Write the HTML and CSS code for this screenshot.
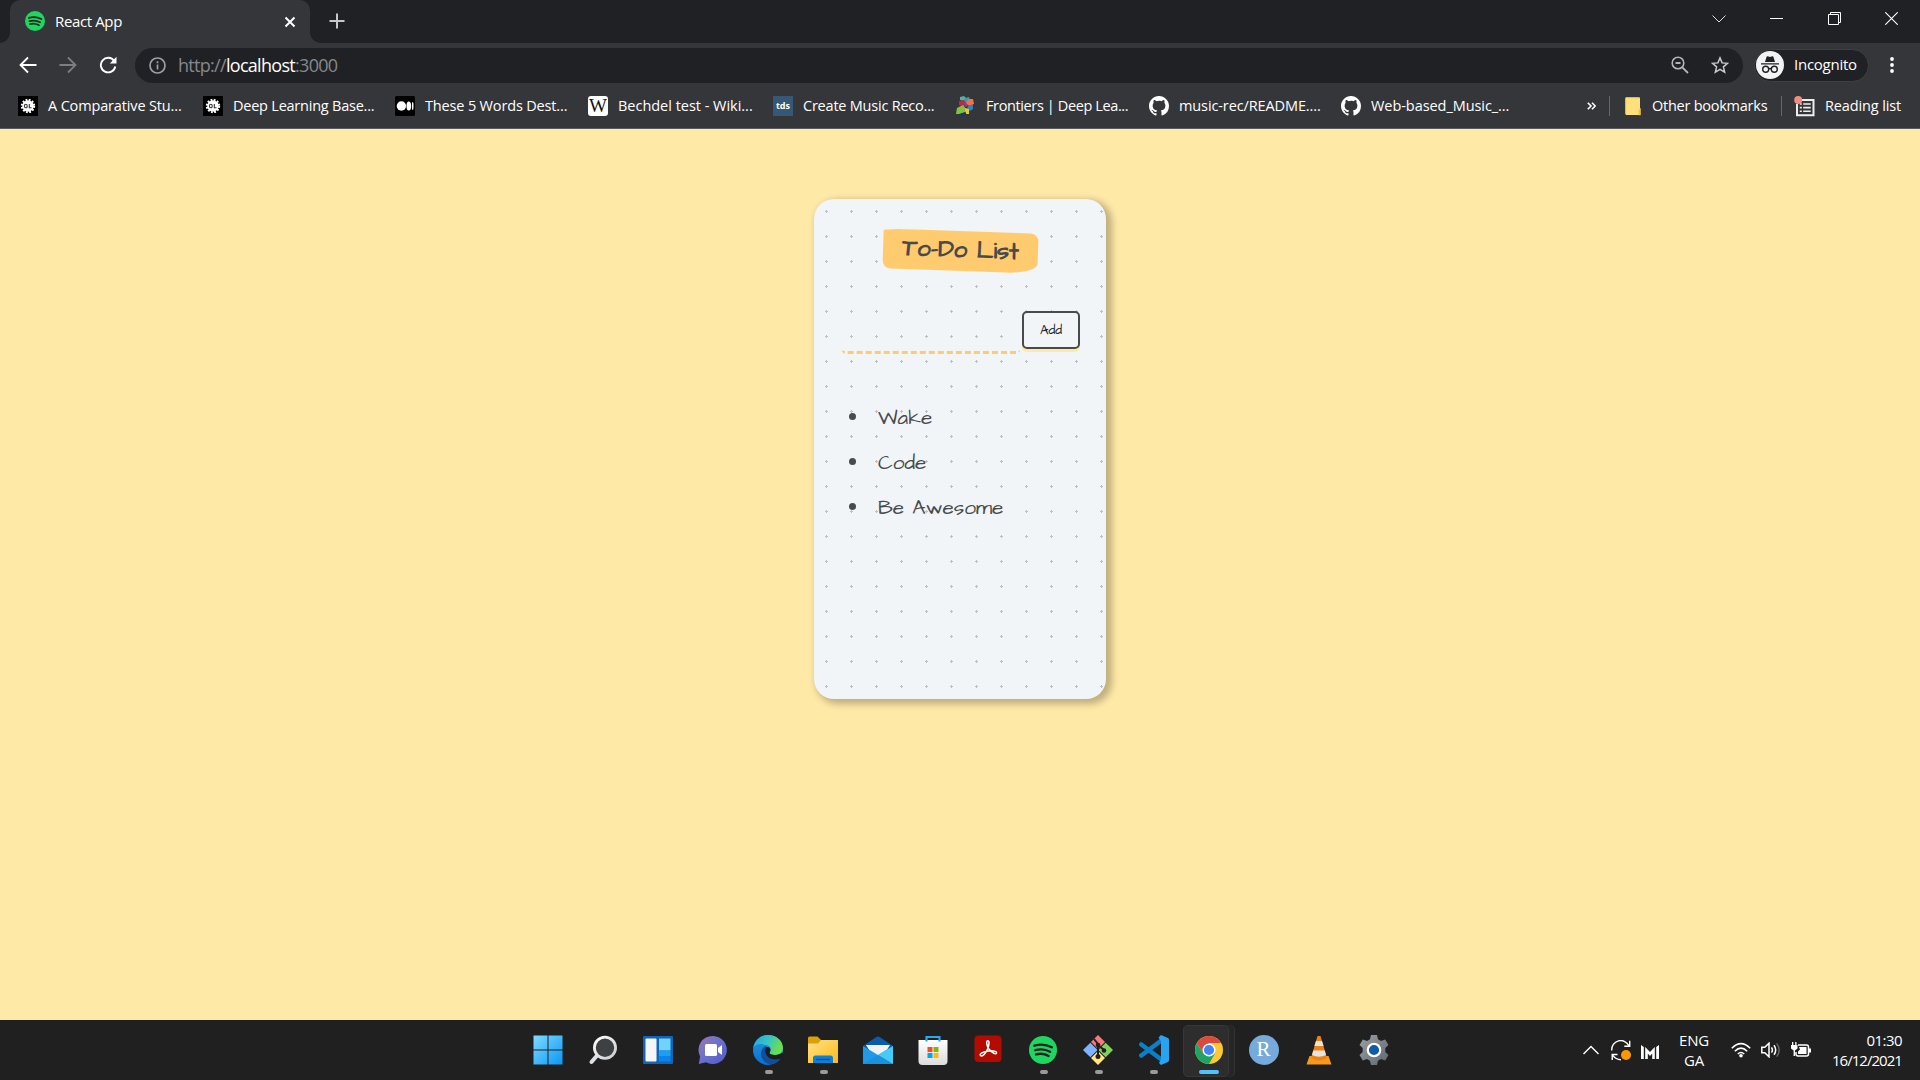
FILE: index.html
```
<!DOCTYPE html>
<html lang="en">
<head>
<meta charset="utf-8">
<title>React App</title>
<link rel="stylesheet" href="styles.css">
</head>
<body>
<svg class="defs" width="0" height="0">
  <defs>
    <linearGradient id="win" x1="0" y1="0" x2="1" y2="1"><stop offset="0" stop-color="#7fdcff"/><stop offset="1" stop-color="#0a96f5"/></linearGradient>
    <linearGradient id="lens" x1="0" y1="0" x2="1" y2="1"><stop offset="0" stop-color="#fff"/><stop offset="1" stop-color="#c9cccf"/></linearGradient>
    <linearGradient id="chat" x1="0" y1="0" x2="1" y2="1"><stop offset="0" stop-color="#9a78b0"/><stop offset=".5" stop-color="#6a6fd0"/><stop offset="1" stop-color="#5558c0"/></linearGradient>
    <linearGradient id="edgeTop" x1="0" y1="0" x2="1" y2=".4"><stop offset="0" stop-color="#1ca4e0"/><stop offset=".5" stop-color="#35c3c9"/><stop offset="1" stop-color="#6be04a"/></linearGradient>
    <linearGradient id="edgeLow" x1="0" y1="0" x2="0" y2="1"><stop offset="0" stop-color="#2398de"/><stop offset="1" stop-color="#0b6fd0"/></linearGradient>
    <linearGradient id="folder" x1="0" y1="0" x2="1" y2="1"><stop offset="0" stop-color="#ffe28a"/><stop offset="1" stop-color="#fdb913"/></linearGradient>
    <linearGradient id="gear" x1="0" y1="0" x2="1" y2="1"><stop offset="0" stop-color="#9aa0a6"/><stop offset="1" stop-color="#5f676e"/></linearGradient>
    <linearGradient id="bag" x1="0" y1="0" x2="0" y2="1"><stop offset="0" stop-color="#fff"/><stop offset="1" stop-color="#dcdcdc"/></linearGradient>
    <symbol id="spotify" viewBox="0 0 24 24"><circle cx="12" cy="12" r="12" fill="#1ed760"/><path d="M4.6 8.3c5-1.5 10.600-1 15 1.400M5.400 12.200c4.300-1.200 9-.8 12.700 1.400M6 15.800c3.600-1 7.500-.6 10.800 1.300" fill="none" stroke="#1c2420" stroke-width="2" stroke-linecap="round"/></symbol>
    <symbol id="github" viewBox="0 0 16 16"><path fill="#fff" d="M8 0C3.580 0 0 3.580 0 8c0 3.540 2.290 6.530 5.470 7.590.4.070.55-.17.55-.38 0-.19-.01-.82-.01-1.490-2.010.37-2.530-.49-2.690-.94-.09-.23-.48-.94-.82-1.130-.28-.15-.68-.52-.01-.53.63-.01 1.080.58 1.230.82.72 1.210 1.870.87 2.330.66.070-.52.28-.87.51-1.070-1.780-.2-3.640-.89-3.640-3.950 0-.87.31-1.590.82-2.150-.08-.2-.36-1.020.08-2.120 0 0 .67-.21 2.200.82A7.600 7.600 0 0 1 8 3.860c.68 0 1.360.09 2 .27 1.530-1.040 2.200-.82 2.200-.82.44 1.100.16 1.920.08 2.120.51.56.82 1.270.82 2.150 0 3.070-1.870 3.750-3.650 3.950.29.25.54.73.54 1.480 0 1.070-.01 1.930-.01 2.200 0 .21.15.46.55.38A8.010 8.010 0 0 0 16 8c0-4.420-3.580-8-8-8z"/></symbol>
    <symbol id="dl" viewBox="0 0 20 20"><path fill="#000" d="M0 0h20v20H0z"/><circle cx="10" cy="10" r="5.800" fill="#fff"/><circle cx="10" cy="10" r="6.200" fill="none" stroke="#fff" stroke-width="2" stroke-dasharray="1.800 1.450"/><path d="M7.800 8.200q-1.400 0-1.400 1.800t1.400 1.800 1.400-1.800-1.400-1.800zM11.300 8v3.800h2.200" fill="none" stroke="#333" stroke-width="1.100"/></symbol>
  </defs>
</svg>

<header class="browser">
  <div class="tabstrip">
    <div class="tab">
      <svg class="fav" width="20" height="20"><use href="#spotify"/></svg>
      <span class="tab-title">React App</span>
      <svg width="12" height="12" viewBox="0 0 12 12"><path d="M1.500 1.500l9 9m0-9l-9 9" stroke="#fff" stroke-width="2"/></svg>
    </div>
    <svg class="newtab" width="16" height="16" viewBox="0 0 16 16"><path d="M8 .5v15M.5 8h15" stroke="#c6c7c9" stroke-width="2"/></svg>
    <div class="winbtns">
      <span><svg width="14" height="14" viewBox="0 0 14 14"><path d="M.5 3.500l6.500 6.500 6.500-6.500" fill="none" stroke="#ddd"/></svg></span>
      <span><svg width="13" height="13" viewBox="0 0 13 13"><path d="M0 6.500h13" stroke="#fff"/></svg></span>
      <span><svg width="13" height="13" viewBox="0 0 13 13"><path d="M.5 2.500h10v10H.5zM2.500 2.500v-2h10v10h-2" fill="none" stroke="#fff"/></svg></span>
      <span><svg width="13" height="13" viewBox="0 0 13 13"><path d="M.3.3l12.400 12.400m0-12.400L.3 12.700" stroke="#fff" stroke-width="1.100"/></svg></span>
    </div>
  </div>

  <div class="toolbar">
    <div class="nav">
      <svg width="18" height="18" viewBox="0 0 18 18"><path d="M17.500 9H2M9 1.500L1.500 9 9 16.500" fill="none" stroke="#fff" stroke-width="1.800"/></svg>
      <svg width="18" height="18" viewBox="0 0 18 18"><path d="M.5 9H16M9 1.500L16.500 9 9 16.500" fill="none" stroke="#7d7e82" stroke-width="1.800"/></svg>
      <svg width="18" height="18" viewBox="0 0 18 18"><path d="M15.200 5A7.300 7.300 0 1 0 16.300 10.500" fill="none" stroke="#fff" stroke-width="1.900"/><path d="M17.500.8v6.700h-6.700z" fill="#fff"/></svg>
    </div>
    <div class="omnibox">
      <svg width="17" height="17" viewBox="0 0 17 17"><circle cx="8.500" cy="8.500" r="7.500" fill="none" stroke="#9aa0a6" stroke-width="1.700"/><path d="M8.500 7.500v5M8.500 4.300v1.900" stroke="#9aa0a6" stroke-width="1.700"/></svg>
      <span class="url">http://<b>localhost</b>:3000</span>
      <svg class="mag" width="18" height="18" viewBox="0 0 18 18"><circle cx="7" cy="7" r="5.800" fill="none" stroke="#b4b6b9" stroke-width="1.600"/><path d="M4.500 7h5M11.300 11.300l5.700 5.700" stroke="#b4b6b9" stroke-width="1.800"/></svg>
      <svg class="star" width="18" height="18" viewBox="0 0 18 18"><path d="M9 1.900l2.100 5 5.400.45-4.100 3.500 1.250 5.250L9 13.300l-4.650 2.800L5.600 10.850l-4.100-3.500 5.400-.45z" fill="none" stroke="#c8c9cb" stroke-width="1.500"/></svg>
    </div>
    <div class="incog">
      <svg width="28" height="28" viewBox="0 0 28 28"><circle cx="14" cy="14" r="14" fill="#f1f3f4"/><path d="M9 11l1.600-5.200q.4-.8 1.200-.5l2.200.6 2.200-.6q.8-.3 1.200.5L19 11zM5 12.200h18v1.300H5z" fill="#202124"/><g fill="none" stroke="#202124" stroke-width="1.400"><circle cx="9.700" cy="18.300" r="3"/><circle cx="18.300" cy="18.300" r="3"/><path d="M12.700 18q1.300-.9 2.600 0"/></g></svg>
      <span class="incog-text">Incognito</span>
    </div>
    <svg class="menu" width="4" height="16" viewBox="0 0 4 16" fill="#fff"><circle cx="2" cy="2" r="1.900"/><circle cx="2" cy="8" r="1.900"/><circle cx="2" cy="14" r="1.900"/></svg>
  </div>

  <nav class="bookmarks">
    <div class="bm w185"><svg width="20" height="20"><use href="#dl"/></svg><span class="t1">A Comparative Stu...</span></div>
    <div class="bm w192"><svg width="20" height="20"><use href="#dl"/></svg><span class="t2">Deep Learning Base...</span></div>
    <div class="bm w193"><svg width="20" height="20" viewBox="0 0 20 20"><rect width="20" height="20" rx="1.500"/><circle cx="6.400" cy="10" r="4.700" fill="#fff"/><ellipse cx="13.800" cy="10" rx="2.300" ry="4.600" fill="#fff"/><ellipse cx="17.700" cy="10" rx=".8" ry="4.100" fill="#fff"/></svg><span class="t3">These 5 Words Dest...</span></div>
    <div class="bm w185"><b class="fi wiki">W</b><span class="t4">Bechdel test - Wiki...</span></div>
    <div class="bm w183"><b class="fi tds">tds</b><span class="t5">Create Music Reco...</span></div>
    <div class="bm w193"><svg width="20" height="20" viewBox="0 0 20 20"><path d="M4 1l4-1 2 2-2 3-4-1z" fill="#4bb5a8"/><path d="M9 2l4-1 1 3-3 3-3-2z" fill="#35a0a0"/><path d="M3 5l5-1 2 4-3 3-4-2z" fill="#c22740"/><path d="M8 6l3 0 1 4-3 1z" fill="#8b3fa0"/><path d="M12 3l5 0 1 5-5 2-3-3z" fill="#f2704e"/><path d="M13 9l4 0 0 4-3 2-3-3z" fill="#2f83c5"/><path d="M1 12l6-3 4 5-3 4-8 0z" fill="#8abf3e"/><path d="M9 12l4 1 0 5-3 0z" fill="#f6c61d"/><path d="M3 18l6-2 2 3-4 1z" fill="#12386f"/></svg><span class="t6">Frontiers | Deep Lea...</span></div>
    <div class="bm w192"><svg width="20" height="20"><use href="#github"/></svg><span class="t7">music-rec/README....</span></div>
    <div class="bm"><svg width="20" height="20"><use href="#github"/></svg><span class="t8">Web-based_Music_...</span></div>
    <div class="bm-right">
      <svg class="more" width="9" height="8" viewBox="0 0 9 8"><path d="M.8.8L4 4 .8 7.200M5 .8L8.200 4 5 7.200" fill="none" stroke="#fff" stroke-width="1.600"/></svg>
      <i class="sep"></i>
      <svg class="fold" width="16" height="19" viewBox="0 0 16 19"><path d="M1 .5h13q1 0 1 1v9.500h.5v7H1.500q-1 0-1-1V1z" fill="#ffe07d"/><path d="M.5 18.200h13V14q0-2 2-2.200v6.400z" fill="#f3c62f"/><path d="M.8 17V.8H14.500" fill="none" stroke="#f6d04c"/></svg>
      <span class="other">Other bookmarks</span>
      <i class="sep sep2"></i>
      <svg class="rl" width="21" height="21" viewBox="0 0 21 21"><path d="M3 8v11.200h16.500V4H7.500" fill="none" stroke="#eee" stroke-width="2"/><path d="M5.800 8h2M5.800 11.600h2M5.800 15.200h2M9.200 8h7.500M9.200 11.600h7.500M9.200 15.200h7.500" stroke="#eee" stroke-width="1.600"/><circle cx="4.200" cy="4" r="4" fill="#f28b82"/></svg>
      <span class="reading">Reading list</span>
    </div>
  </nav>
</header>

<main class="page">
  <section class="card">
    <h1 class="heading"><span>To-Do List</span></h1>
    <div class="form">
      <div class="input"></div>
      <button class="add">Add</button>
    </div>
    <ul class="todos">
      <li><span>Wake</span></li>
      <li><span>Code</span></li>
      <li><span>Be Awesome</span></li>
    </ul>
  </section>
</main>

<footer class="taskbar">
  <div class="apps">
    <div class="app"><svg width="30" height="30" viewBox="0 0 30 30"><path d="M.5 .5h14v14h-14zM15.500.5h14v14h-14zM.5 15.500h14v14h-14zM15.500 15.500h14v14h-14z" fill="url(#win)"/></svg></div>
    <div class="app"><svg width="30" height="30" viewBox="0 0 30 30"><path d="M9.500 20L3.500 27" stroke="#dfe1e3" stroke-width="4" stroke-linecap="round"/><circle cx="17" cy="12.800" r="10.600" fill="#3e4042" stroke="url(#lens)" stroke-width="2.800"/></svg></div>
    <div class="app"><svg width="30" height="30" viewBox="0 0 30 30"><rect y="1" width="30" height="28" rx="1" fill="#0f66b8"/><rect x="2.500" y="3.500" width="11" height="23" rx="1" fill="#f5f5f5"/><path d="M16 3.500h11.500v12H16z" fill="#6fd3ff"/><path d="M16 16h11.500v5H16z" fill="#19a0f5"/><path d="M16 21h11.500v5.500H16z" fill="#0a84e8"/></svg></div>
    <div class="app"><svg width="30" height="30" viewBox="0 0 30 30"><path d="M15 1a14 14 0 1 1-7 26.200L.8 29l1.300-7.500A14 14 0 0 1 15 1z" fill="url(#chat)"/><rect x="7" y="9" width="12" height="12" rx="1.500" fill="#fff"/><path d="M20 13l4-3v10l-4-3z" fill="#fff"/></svg></div>
    <div class="app run"><svg width="30" height="30" viewBox="0 0 30 30"><circle cx="15" cy="15" r="15" fill="url(#edgeLow)"/><path d="M.3 13C2 4 8 0 15 0c9 0 15 6 15 13 0 5-4 7-8 7-5 0-6-1.500-5-3 2-3 0-7-4.500-7C7 8 2.500 9.500.3 13z" fill="url(#edgeTop)"/><path d="M12.500 11C7 14 6 22 12 27c5 4 12 2 16-4-7 3-15 0-14-6 0-2 1-3 1-4z" fill="#104f9c"/><path d="M13 12.500c3-1.500 5.500 1.500 4 4-1.200 2 0 3.500 5 3.500 3.500 0 5.500-1 7-2.500L31 20l-3 3.500c-4 1.700-11 1.500-14-2.800-2-3-2.500-6.500-1-8.200z" fill="#1c1e20"/></svg></div>
    <div class="app run"><svg width="30" height="30" viewBox="0 0 30 30"><path d="M0 3q0-1.500 1.500-1.500h8L13 5v6H0z" fill="#dda006"/><path d="M0 8.500h10L13 5h17v23H0z" fill="url(#folder)"/><path d="M5 28v-5q0-2.500 2.500-2.500h15q2.500 0 2.500 2.500v5z" fill="#0c7fd6"/><path d="M8 24.500h14" stroke="#0a4d94" stroke-width="1.300"/></svg></div>
    <div class="app"><svg width="30" height="30" viewBox="0 0 30 30"><path d="M0 11L13 2.200q2-1.500 4 0L30 11l-15 10z" fill="#0b5cab"/><path d="M3 10h24l-5 8-7 4-7-4z" fill="#f3f3f3"/><path d="M0 11l15 9 15-9v18H0z" fill="#1d9bea"/><path d="M15 20l15-9v18z" fill="#44cbf8"/><path d="M0 29l15-9 15 9z" fill="#1a91df"/></svg></div>
    <div class="app"><svg width="30" height="30" viewBox="0 0 30 30"><path d="M.5 5h29v21q0 4-4 4h-21q-4 0-4-4z" fill="url(#bag)"/><path d="M8.500 6.500V2h13v4.500" fill="none" stroke="#27a9f0" stroke-width="2.200"/><path d="M9.500 12h5v5h-5z" fill="#f25022"/><path d="M15.500 12h5v5h-5z" fill="#7fba00"/><path d="M9.500 18h5v5h-5z" fill="#00a4ef"/><path d="M15.500 18h5v5h-5z" fill="#ffb900"/></svg></div>
    <div class="app"><svg width="30" height="30" viewBox="0 0 30 30"><rect x="1.500" y=".5" width="27" height="26.500" rx="4" fill="#b30b00"/><path d="M7.500 20.500c-1.500-1.500 2.500-4 8-4.500 5-.5 8.500.2 8 2-.6 2-5-.6-7.600-4C13.500 10.500 13 6 14.600 5.800c2-.2 1.700 4 0 8.200-2 4.600-5.600 8.300-7.100 6.500z" fill="none" stroke="#fff" stroke-width="1.500"/></svg></div>
    <div class="app run"><svg width="28" height="28"><use href="#spotify"/></svg></div>
    <div class="app run"><svg width="30" height="30" viewBox="0 0 30 30"><path d="M15 0l7 7-7 7-7-7z" fill="#f47b7b"/><path d="M7.300 7.700l7.300 7.300-7.300 7.300L0 15z" fill="#80b3ff"/><path d="M22.700 7.700L30 15l-7.300 7.300-7.300-7.300z" fill="#80d25e"/><path d="M15 16l7 7-7 7-7-7z" fill="#ffe680"/><path d="M11 4l4 5v13M15 10l6 5" fill="none" stroke="#231f20" stroke-width="2"/><g fill="#231f20"><circle cx="15" cy="10" r="2.300"/><circle cx="21" cy="15.500" r="2.300"/><circle cx="15" cy="21.500" r="2.500"/></g></svg></div>
    <div class="app run"><svg width="30" height="30" viewBox="0 0 30 30"><path d="M2.300 9.500L23 25M2.300 20.500L23 5" stroke="#0a7fcb" stroke-width="4.500" stroke-linecap="round"/><path d="M22 0l7 3q1 .5 1 2v20q0 1.500-1 2l-7 3-2-2 2-4V6.500L19.500 2.500z" fill="#27a3f0"/></svg></div>
    <div class="app run active"><svg width="28" height="28" viewBox="0 0 28 28"><circle cx="14" cy="14" r="14" fill="#fbc934"/><path d="M14 7h12.100A14 14 0 0 0 1.900 7L8 17.500z" fill="#dc4a3d"/><path d="M1.900 7A14 14 0 0 0 14 28l6-10.500-6 2-6-2z" fill="#1fa463"/><circle cx="14" cy="14" r="6.500" fill="#fff"/><circle cx="14" cy="14" r="5.100" fill="#4285f4"/></svg></div>
    <div class="app"><span class="rlogo">R</span></div>
    <div class="app"><svg width="30" height="30" viewBox="0 0 30 30"><path d="M5.500 21h19l3 8.500h-25z" fill="#f79a1c"/><path d="M13.500 1h3L23 23q-8 5-16 0z" fill="#f08010"/><path d="M12 6h6l1.600 5h-9.200zM9.300 15.500h11.400L22 20q-7 3.500-14 0z" fill="#e4e4e4"/></svg></div>
    <div class="app"><svg width="30" height="30" viewBox="0 0 30 30"><path d="M12 0h6l1 4.200 3 1.700 4.200-1.300 3.300 5.400-3.200 3v4l3.200 3-3.300 5.400-4.200-1.300-3 1.700L18 30h-6l-1-4.200-3-1.700-4.200 1.300L.5 20l3.200-3v-4L.5 10l3.300-5.400L8 5.900l3-1.700z" fill="url(#gear)"/><circle cx="15" cy="15" r="6.200" fill="#105ca8" stroke="#fff" stroke-width="2.200"/></svg></div>
  </div>
  <div class="tray">
    <svg class="up" width="16" height="10" viewBox="0 0 16 10"><path d="M.5 9L8 1.500 15.500 9" fill="none" stroke="#fff" stroke-width="1.400"/></svg>
    <svg class="sync" width="20" height="21" viewBox="0 0 20 21"><path d="M.8 10.500A9 9 0 0 1 18 6M18.700.8V6.200H13.300M1.200 20v-5.500H6.500M2 15.500Q4.500 19.500 10 19.700" fill="none" stroke="#fff" stroke-width="1.400"/><circle cx="15" cy="15" r="5" fill="#ff9800"/></svg>
    <svg class="mm" width="18" height="14" viewBox="0 0 18 14"><path d="M0 0l2.800 2v12H0zM18 0l-2.800 2v12H18zM4.200 2L9 7l4.800-5V14h-2.600V8.500L9 11 6.800 8.500V14H4.200z" fill="#fff"/></svg>
    <div class="lang"><span>ENG</span><span>GA</span></div>
    <svg class="wifi" width="20" height="16" viewBox="0 0 20 16"><path d="M.8 6.200q9.200-9 18.400 0M3.800 9.200q6.200-6 12.400 0M6.800 12q3.200-3 6.400 0" fill="none" stroke="#fff" stroke-width="1.600"/><circle cx="10" cy="13.700" r="1.800" fill="#fff"/></svg>
    <svg class="vol" width="20" height="16" viewBox="0 0 20 16"><path d="M.8 5.300h3L8 1.200v13.600l-4.200-4.100h-3zM10.500 5.300q1.800 2.700 0 5.400M13 3.300q3.400 4.700 0 9.400" fill="none" stroke="#fff" stroke-width="1.500"/><path d="M15.700 1.300q5 6.700 0 13.400" fill="none" stroke="#666" stroke-width="1.400"/></svg>
    <svg class="bat" width="20" height="16" viewBox="0 0 20 16"><path d="M7 3h8.500q2 0 2 2v7q0 2-2 2H7q-2 0-2-2v-2" fill="none" stroke="#fff" stroke-width="1.500"/><path d="M8 5h7.500v7H7V9.500L9 7.500zM18 6.500h2v4h-2zM0 3h1V0h1.300v3h1.900V0h1.300v3h1v3.500L4 8.500V14H2.600V8.500L0 6.500z" fill="#fff"/></svg>
    <div class="clock"><span class="time">01:30</span><span class="date">16/12/2021</span></div>
  </div>
</footer>
</body>
</html>
```

FILE: styles.css
```
* { box-sizing: border-box; }
body {
  margin: 0;
  width: 1920px;
  height: 1080px;
  overflow: hidden;
  display: flex;
  flex-direction: column;
  font-family: "Segoe UI", "Open Sans", sans-serif;
  font-size: 15px;
  color: #fff;
}
svg { flex: none; display: block; }
span { white-space: nowrap; }
.defs { position: absolute; }

/* browser chrome */
.browser { height: 129px; background: #35363a; border-bottom: 1px solid #5b5c60; flex: none; }
.tabstrip { height: 43px; background: #202124; display: flex; align-items: center; padding-left: 10px; }
.tab {
  position: relative;
  width: 300px;
  height: 43px;
  background: #35363a;
  border-radius: 10px 10px 0 0;
  display: flex;
  align-items: center;
  padding: 0 14px 0 15px;
}
.tab::before, .tab::after {
  content: "";
  position: absolute;
  bottom: 0;
  width: 10px;
  height: 10px;
}
.tab::before { left: -10px; background: radial-gradient(circle at 0 0, #202124 9.5px, #35363a 10px); }
.tab::after { right: -10px; background: radial-gradient(circle at 100% 0, #202124 9.5px, #35363a 10px); }
.fav { margin-bottom: 2px; }
.tab-title { margin-left: 10px; flex: 1; font-size: 15px; letter-spacing: -.37px; padding-bottom: 2px; }
.newtab { margin-left: 19px; margin-bottom: 1px; }
.winbtns { margin-left: auto; display: flex; align-self: flex-start; height: 37px; }
.winbtns span { width: 57.3px; display: flex; align-items: center; justify-content: center; }

.toolbar { height: 44px; display: flex; align-items: center; padding-left: 7px; }
.nav { display: flex; width: 128px; padding-left: 1px; }
.nav svg { margin: 0 11px; }
.omnibox {
  width: 1608px;
  height: 35px;
  border-radius: 18px;
  background: #202124;
  display: flex;
  align-items: center;
  padding: 0 14px;
}
.url { margin-left: 12px; font-size: 18px; color: #85888c; letter-spacing: -.7px; }
.url b { font-weight: 400; color: #fff; }
.mag { margin-left: auto; }
.star { margin-left: 22px; }
.incog {
  margin-left: 11px;
  width: 115px;
  height: 33px;
  border-radius: 17px;
  background: #202124;
  border: 1px solid #3f4044;
  display: flex;
  align-items: center;
  padding-left: 1px;
}
.incog-text { margin-left: 10px; font-size: 15px; letter-spacing: -.25px; padding-bottom: 2px; }
.menu { margin-left: 21px; }

.bookmarks { height: 41px; display: flex; align-items: center; padding: 0 18px 3px; font-size: 14.500px; }
.bookmarks span { padding-bottom: 2px; }
.bm { display: flex; align-items: center; gap: 10px; flex: none; }
.w183 { width: 183px; }
.w185 { width: 185px; }
.w192 { width: 192px; }
.w193 { width: 193px; }
.t1 { letter-spacing: -.15px; }
.t2 { letter-spacing: -.23px; }
.t3 { letter-spacing: -.16px; }
.t4 { letter-spacing: -.02px; }
.t5 { letter-spacing: -.22px; }
.t6 { letter-spacing: -.38px; }
.t7 { letter-spacing: -.11px; }
.t8 { letter-spacing: -.06px; }
.fi { width: 20px; height: 20px; text-align: center; line-height: 20px; }
.wiki { background: #fff; color: #111; border-radius: 3px; font: 19px/20px "Liberation Serif", serif; }
.tds { background: #355876; font-size: 9px; line-height: 19px; }
.bm-right { margin-left: auto; display: flex; align-items: center; }
.sep { width: 1px; height: 20px; background: #66676b; margin: 0 15px 0 13px; }
.sep2 { margin: 0 12px 0 13px; }
.other { margin-left: 11px; width: 116px; letter-spacing: -.25px; }
.reading { margin-left: 10px; width: 77px; letter-spacing: -.12px; }

/* to-do page */
.page { flex: 1; background: #ffe9a7; padding-top: 70px; color: #494a4b; font-family: "Architects Daughter", Lato, sans-serif; }
.card {
  width: 292px;
  height: 500px;
  margin: 0 auto;
  padding: 32px 26px 0 28px;
  border-radius: 20px;
  background: #f1f5f8 radial-gradient(#bfc0c1 7.2%, transparent 0) 0 0 / 25px 25px;
  box-shadow: 4px 3px 7px 2px #00000040;
}
.heading {
  margin: 0 0 0 41px;
  width: 155px;
  height: 40px;
  display: flex;
  align-items: center;
  justify-content: center;
  background: #ffcb6e;
  border-radius: 20% 5% 20% 5% / 5% 20% 25% 20%;
  transform: rotate(2deg);
  font-size: 24px;
  font-weight: 700;
}
.heading span { padding-bottom: 2px; }
.form { display: flex; margin-top: 40px; height: 43px; }
.input {
  width: 178px;
  border-bottom: 3px dashed #ffcb6e;
  border-radius: 4px;
  margin-right: 2px;
}
.add {
  width: 58px;
  height: 38px;
  padding: 0;
  border: 2px solid #494a4b;
  border-radius: 5px;
  background: #f1f5f8;
  box-shadow: 0 3px #ffe9a7;
  font: 13.330px "Architects Daughter", Lato, sans-serif;
  color: #222;
}
.todos { list-style: none; margin: 40px 0 0; padding: 0; font-size: 20.800px; font-weight: 400; }
.todos li { height: 45px; display: flex; align-items: center; padding-left: 7px; }
.todos li::before { content: ""; width: 7px; height: 7px; border-radius: 50%; background: #494a4b; margin-right: 22px; }
.todos span { padding-top: 1px; }

/* taskbar */
.taskbar { height: 60px; flex: none; background: #202020; display: flex; padding-left: 520.500px; }
.apps { display: flex; }
.app { position: relative; width: 55.060px; height: 60px; display: flex; align-items: center; justify-content: center; }
.app svg { position: relative; }
.run::after { content: ""; position: absolute; bottom: 6px; left: 24px; width: 8px; height: 4px; border-radius: 2px; background: #9a9a9a; }
.active::after { left: 18px; width: 20px; background: #4cc2ff; }
.active::before {
  content: "";
  position: absolute;
  left: 2px;
  top: 5px;
  width: 44px;
  height: 50px;
  border-radius: 5px;
  background: #2d2d2d;
  border: 1px solid #373737;
  box-shadow: 5px 0 0 #262626, 6px 0 0 #333;
}
.rlogo { width: 30px; height: 30px; border-radius: 50%; background: #75aadb; text-align: center; font: 21px/29px "Liberation Serif", serif; }
.tray { margin-left: auto; display: flex; align-items: center; padding-right: 18px; }
.sync { margin-left: 12px; }
.mm { margin: 3px 0 0 10px; }
.lang { display: flex; flex-direction: column; align-items: center; width: 30px; margin: 0 22px 0 20px; font-size: 15px; line-height: 20px; letter-spacing: -.2px; }
.vol, .bat { margin-left: 10px; }
.clock { display: flex; flex-direction: column; align-items: flex-end; width: 91px; font-size: 15px; line-height: 20px; letter-spacing: -.55px; }
.date { letter-spacing: -.95px; }
```
